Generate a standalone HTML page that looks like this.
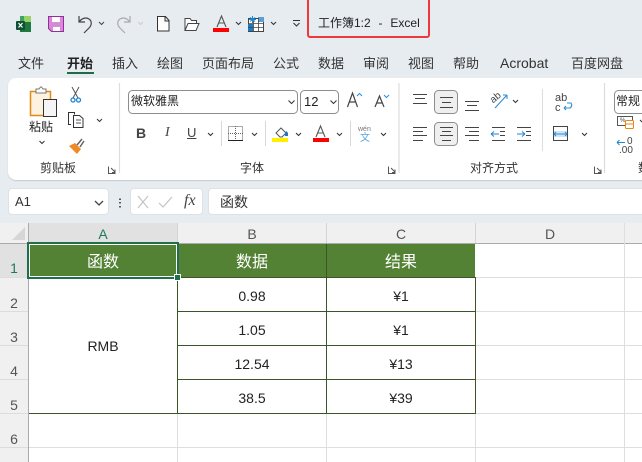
<!DOCTYPE html>
<html lang="zh"><head><meta charset="utf-8">
<style>
html,body{margin:0;padding:0}
body{width:642px;height:462px;overflow:hidden;position:relative;background:#e6ecf0;font-family:"Liberation Sans","Noto Sans CJK SC",sans-serif;color:#333}
.t{position:absolute;white-space:nowrap;line-height:1}
.c{position:absolute;transform:translateX(-50%);white-space:nowrap;line-height:1}
.b{position:absolute}
svg{position:absolute;left:0;top:0}
</style></head><body>

<div class="b" style="left:8px;top:78px;width:660px;height:102px;background:#fff;border-radius:8px;box-shadow:0 1px 1px #c4cacd"></div>
<div class="b" style="left:307px;top:-3px;width:119px;height:37px;border:2px solid #f0383c;border-radius:3px"></div>
<div class="t" style="left:318px;top:17px;font-size:12px;color:#222;word-spacing:.6px">工作簿1:2&nbsp;&nbsp;-&nbsp;&nbsp;Excel</div>

<div class="t" style="left:18px;top:57px;font-size:13px">文件</div>
<div class="t" style="left:67px;top:57px;font-size:13px;font-weight:bold;color:#222">开始</div>
<div class="b" style="left:67px;top:72px;width:27px;height:2px;background:#1e6b45"></div>
<div class="t" style="left:112px;top:57px;font-size:13px">插入</div>
<div class="t" style="left:157px;top:57px;font-size:13px">绘图</div>
<div class="t" style="left:202px;top:57px;font-size:13px">页面布局</div>
<div class="t" style="left:273px;top:57px;font-size:13px">公式</div>
<div class="t" style="left:318px;top:57px;font-size:13px">数据</div>
<div class="t" style="left:363px;top:57px;font-size:13px">审阅</div>
<div class="t" style="left:408px;top:57px;font-size:13px">视图</div>
<div class="t" style="left:453px;top:57px;font-size:13px">帮助</div>
<div class="t" style="left:500px;top:56px;font-size:14px">Acrobat</div>
<div class="t" style="left:571px;top:57px;font-size:13px">百度网盘</div>

<svg width="642" height="462" viewBox="0 0 642 462" fill="none">
<!-- QAT -->
<path d="M20 16h11v6h-11z" fill="#3fa45f"/><path d="M24 16h7v7h-7z" fill="#9ad26a"/><path d="M20 22h11v10h-11z" fill="#1d7a3c"/>
<rect x="16" y="21" width="9" height="9" rx="1" fill="#0f4f33"/><path d="M18.500 23l4 4.500M22.500 23l-4 4.500" stroke="#fff" stroke-width="1.200"/>
<path d="M48.500 16.500h15v15h-12l-3-3z" fill="#d58ad6" stroke="#9a2aa0"/><rect x="52" y="17" width="8" height="5" fill="#fff"/><rect x="53" y="27" width="7" height="4" fill="#fff"/>
<path d="M79 16v6h6M79 22c3-4 7-5 10-3 3 2 3 6 0 9l-5 5" stroke="#444" stroke-width="1.200"/>
<path d="M99 22l2.500 2.500 2.500-2.500" stroke="#444" stroke-width="1"/>
<path d="M130 16v6h-6M130 22c-3-4-7-5-10-3-3 2-3 6 0 9l5 5" stroke="#aaa" stroke-width="1.200"/>
<path d="M138 22l2.500 2.500 2.500-2.500" stroke="#ccc"/>
<path d="M157.500 16.500h8l3.500 4v10.500h-11.500zM165 16.500v4.500h4" stroke="#333" fill="#fff"/>
<path d="M185 30.500v-12h5l1.500 2h5v3M185 30.500l3-7h11l-3 7z" stroke="#444" fill="#fff"/>
<path d="M217 27l4.500-11 4.500 11M218.500 23h6" stroke="#555" stroke-width="1.100"/><rect x="213" y="28" width="16" height="4" fill="#f00"/>
<path d="M236 22l2.500 2.500 2.500-2.500M271 22l2.500 2.500 2.500-2.500" stroke="#333"/>
<rect x="248.500" y="18.500" width="15" height="13" stroke="#444" fill="#fff"/><rect x="258" y="17" width="6" height="5" fill="#5a9fd6"/><rect x="248" y="24" width="5" height="7" fill="#1f78c4"/><path d="M248 23.500h16M248 27.500h16M253.500 18v14M258.500 18v14" stroke="#444" stroke-width=".8"/>
<path d="M249 19.500h7M252.500 16v7M250 17.500l5 4M255 17.500l-5 4" stroke="#1f86d0"/>
<path d="M293 20.500h7M293.500 23l3 3 3-3" stroke="#333"/>
<!-- Clipboard -->
<path d="M30.500 91.500h20v24h-20z" fill="#fdf2df" stroke="#e48a14" stroke-width="1.500"/>
<path d="M36 92v-3h3l1.500-2h1l1.500 2h3v4h-10z" fill="#fff" stroke="#777"/>
<rect x="43.500" y="99.500" width="13" height="17" fill="#f5f5f5" stroke="#333"/>
<path d="M39.500 141l2.500 2.500 2.500-2.500" stroke="#333"/>
<path d="M72 87l6 11M79 87l-6 11" stroke="#555"/><circle cx="73" cy="100" r="2" stroke="#1c86d6" stroke-width="1.300"/><circle cx="78.500" cy="100" r="2" stroke="#1c86d6" stroke-width="1.300"/>
<path d="M71 124.500h-2.500v-12h6v2" stroke="#333"/><path d="M73.500 115.500h6l3.500 3v9h-9.500z" stroke="#333" fill="#fff"/><path d="M76 120h5M76 123h5" stroke="#555"/>
<path d="M97 119l2.500 2.500 2.500-2.500" stroke="#333"/>
<path d="M69 146l6-3 6 6-4 5z" fill="#f08a24"/><path d="M77 145l5-6M80 147l4-6" stroke="#666" stroke-width="1.500"/>
<path d="M108.500 166.500v7h7M111 168l4 4M115 169.500v3h-3" stroke="#555"/>
<path d="M119.500 83v90" stroke="#ddd" stroke-width="1.200"/>
<!-- Font -->
<rect x="128.500" y="90.500" width="169" height="23" rx="4" stroke="#8d8d8d" fill="#fff"/>
<path d="M288.500 100.500l3 3 3-3" stroke="#333"/>
<rect x="300.500" y="90.500" width="38" height="23" rx="4" stroke="#8d8d8d" fill="#fff"/>
<path d="M330.500 100.500l3 3 3-3" stroke="#333"/>
<path d="M347.500 107l5-14 5 14M349.500 102h6" stroke="#444" stroke-width="1.200"/><path d="M357 96l2.500-2.500 2.500 2.500" stroke="#2b8fd8"/>
<path d="M375 107l4.500-11 4.500 11M376.500 103h6" stroke="#444" stroke-width="1.200"/><path d="M384 95l2.500 2.500 2.500-2.500" stroke="#2b8fd8"/>
<path d="M208 133l2.500 2.500 2.500-2.500M252 133l2.500 2.500 2.500-2.500M296 133l2.500 2.500 2.500-2.500M337 133l2.500 2.500 2.500-2.500M381 133l2.500 2.500 2.500-2.500" stroke="#333"/>
<path d="M221.500 121v25M265.500 121v25M350.500 121v25" stroke="#d8d8d8"/>
<rect x="228.500" y="126.500" width="14" height="14" stroke="#555" stroke-dasharray="1 1"/><path d="M228 133.500h15M235.500 126v15" stroke="#666" stroke-dasharray="1 1"/><path d="M228 140.500h15" stroke="#222"/>
<path d="M276 133l5-5 5 5-4 4h-2z" stroke="#555" fill="#fff"/><path d="M285 133l1.500-2 1.500 2v3h-3z" fill="#1f78c4"/><rect x="272" y="138" width="16" height="4" fill="#ffef00"/>
<path d="M316 137l4.500-11 4.500 11M318 133h5" stroke="#555" stroke-width="1.100"/><rect x="313" y="138" width="16" height="4" fill="#f00"/>
<path d="M399 83v90" stroke="#ddd" stroke-width="1.200"/>
<path d="M388.500 166.500v7h7M391 168l4 4M395 169.500v3h-3" stroke="#555"/>
<!-- Align -->
<rect x="434.500" y="90.500" width="23" height="23" rx="4" fill="#efefef" stroke="#8d8d8d"/>
<rect x="434.500" y="122.500" width="23" height="23" rx="4" fill="#efefef" stroke="#8d8d8d"/>
<path d="M413 94.500h14M415 98.500h10M413 103.500h14M440 97.500h13M442 102.500h9M440 107.500h13M465 101.500h14M467 105.500h10M465 110.500h14" stroke="#444"/>
<path d="M413 127.500h14M413 131.500h10M413 135.500h14M413 140.500h10M440 127.500h13M442 131.500h9M440 135.500h13M442 140.500h9M465 127.500h14M469 131.500h10M465 135.500h14M469 140.500h10" stroke="#444"/>
<path d="M491 134h8M491 134l3-2.500M491 134l3 2.500" stroke="#1f86d0"/>
<path d="M492 127.500h13M500 131.500h5M500 135.500h5M492 140.500h13" stroke="#444"/>
<path d="M517 134h8M525 134l-3-2.500M525 134l-3 2.500" stroke="#1f86d0"/>
<path d="M517 127.500h14M526 131.500h5M526 135.500h5M517 140.500h14" stroke="#444"/>
<path d="M495 108l12-13M507 95v4M507 95h-4" stroke="#2b8fd8" stroke-width="1.100"/>
<text x="490" y="101" font-size="10" fill="#444" font-family="Liberation Sans" transform="rotate(-40 495 98)">ab</text>
<path d="M513 100l2.500 2.500 2.500-2.500" stroke="#333"/>
<path d="M542.500 89v62" stroke="#ddd"/>
<path d="M567 103h4q2 3-1 5h-6M564 108l2-2M564 108l2 2" stroke="#2b8fd8" stroke-width="1.100"/>
<rect x="553.500" y="126.500" width="14" height="14" stroke="#444" fill="#fff"/>
<rect x="554" y="131" width="13" height="6" fill="#cfe5f6"/><path d="M554 134h13M554 134l2-2M554 134l2 2M567 134l-2-2M567 134l-2 2" stroke="#2b8fd8"/>
<path d="M582 133l2.500 2.500 2.500-2.500" stroke="#333"/>
<path d="M604.500 83v90" stroke="#ddd" stroke-width="1.200"/>
<path d="M594.500 166.500v7h7M597 168l4 4M601 169.500v3h-3" stroke="#555"/>
<rect x="614.500" y="90.500" width="40" height="23" rx="4" stroke="#8d8d8d" fill="#fff"/>
<rect x="617.500" y="116.500" width="15" height="9" stroke="#555" fill="#fff"/>
<rect x="625.500" y="120.500" width="8" height="8" rx="1" fill="#fff" stroke="#e48a14"/><path d="M625 124h8" stroke="#e48a14"/>
<path d="M640 120l2 2" stroke="#333"/>
<path d="M625 142.500h-8M617 142.500l2.500-2.500M617 142.500l2.500 2.500" stroke="#1f86d0"/>
</svg>

<div class="t" style="left:131px;top:95px;font-size:12px;color:#222">微软雅黑</div>
<div class="t" style="left:304px;top:95px;font-size:13px;color:#222">12</div>
<div class="t" style="left:29px;top:121px;font-size:12px;color:#222">粘贴</div>
<div class="t" style="left:136px;top:126px;font-size:14px;font-weight:bold;color:#444">B</div>
<div class="t" style="left:165px;top:126px;font-size:14px;font-style:italic;font-family:'Liberation Serif',serif;color:#444">I</div>
<div class="t" style="left:187px;top:126px;font-size:13px;color:#444;text-decoration:underline">U</div>
<div class="t" style="left:358px;top:126px;font-size:7px;color:#777">wén</div>
<div class="t" style="left:360px;top:134px;font-size:10px;color:#58a6de">文</div>
<div class="t" style="left:555px;top:93px;font-size:11px;color:#444">ab</div>
<div class="t" style="left:555px;top:103px;font-size:11px;color:#444">c</div>
<div class="t" style="left:616px;top:95px;font-size:12px;color:#222">常规</div>
<div class="t" style="left:620px;top:118px;font-size:6px;color:#444">%</div>
<div class="t" style="left:627px;top:137px;font-size:10px;color:#444">0</div>
<div class="t" style="left:619px;top:146px;font-size:10px;color:#444">.00</div>
<div class="t" style="left:40px;top:162px;font-size:12px;color:#333">剪贴板</div>
<div class="t" style="left:240px;top:162px;font-size:12px;color:#333">字体</div>
<div class="t" style="left:470px;top:162px;font-size:12px;color:#333">对齐方式</div>
<div class="t" style="left:638px;top:162px;font-size:12px;color:#333">数</div>

<div class="b" style="left:8px;top:188px;width:99px;height:25px;background:#fff;border:1px solid #dde2e5;border-radius:4px"></div>
<div class="t" style="left:15px;top:195px;font-size:13px;color:#333">A1</div>
<div class="b" style="left:130px;top:188px;width:71px;height:25px;background:#fff;border:1px solid #dde2e5;border-radius:4px"></div>
<div class="b" style="left:208px;top:188px;width:450px;height:25px;background:#fff;border:1px solid #dde2e5;border-radius:4px"></div>
<div class="t" style="left:220px;top:195px;font-size:14px;color:#333">函数</div>
<div class="t" style="left:184px;top:193px;font-size:16px;font-style:italic;font-family:'Liberation Serif',serif;color:#444">fx</div>

<!-- Sheet -->
<div class="b" style="left:0;top:223px;width:642px;height:239px;background:#fff"></div>
<div class="b" style="left:0;top:223px;width:642px;height:20px;background:#f0f0f0"></div>
<div class="b" style="left:0;top:243px;width:28px;height:219px;background:#f0f0f0"></div>
<div class="b" style="left:29px;top:223px;width:148px;height:20px;background:#e1e1e1"></div>
<div class="b" style="left:0;top:243px;width:642px;height:1px;background:#ababab"></div>
<div class="b" style="left:28px;top:223px;width:1px;height:239px;background:#ababab"></div>
<div class="b" style="left:0;top:244px;width:28px;height:33px;background:#e1e1e1"></div>

<svg width="642" height="462" viewBox="0 0 642 462" fill="none">
<path d="M95 201l4 4 4-4" stroke="#444" stroke-width="1.300"/>
<path d="M120 198.500v1.500M120 202v1.500M120 206v1.500" stroke="#333" stroke-width="1.600"/>
<path d="M138 196l10 12M148 196l-10 12" stroke="#c4c4c4" stroke-width="1.200"/>
<path d="M159 203l4 4 9-10" stroke="#c4c4c4" stroke-width="1.200"/>
<path d="M12 240h13v-13z" fill="#d6d6d6"/>
<path d="M178 447.500H642M178 413.500H642M476 277.500H642M476 311.500H642M476 345.500H642M476 379.500H642M29 447.500H178M326.500 413v49M475.500 413v49M177.500 413v49M624.500 223v239" stroke="#dedede"/>
<path d="M326.500 223v20M475.500 223v20M177.500 223v20" stroke="#d4d4d4"/>
<path d="M0 277.500h28M0 311.500h28M0 345.500h28M0 379.500h28M0 413.500h28M0 447.500h28" stroke="#dcdcdc"/>
</svg>

<div class="b" style="left:28px;top:244px;width:447px;height:33px;background:#548235"></div>
<svg width="642" height="462" viewBox="0 0 642 462" fill="none">
<path d="M177.500 277v136M326.500 244v169M475.500 277v136M178 277.500h298M178 311.500h298M178 345.500h298M178 379.500h298M29 413.500h447" stroke="#3c5527"/>
<rect x="28" y="243" width="150" height="35" stroke="#1f6f4a" stroke-width="2"/>
<rect x="29.500" y="244.500" width="147" height="32" stroke="#fff"/>
<rect x="174.500" y="274.500" width="6" height="6" fill="#1f6f4a" stroke="#fff"/>
</svg>

<div class="c" style="left:103px;top:227px;font-size:14px;color:#1d7a5c">A</div>
<div class="c" style="left:252px;top:227px;font-size:14px;color:#555">B</div>
<div class="c" style="left:401px;top:227px;font-size:14px;color:#555">C</div>
<div class="c" style="left:550px;top:227px;font-size:14px;color:#555">D</div>
<div class="c" style="left:14px;top:261px;font-size:14px;color:#1d7a5c">1</div>
<div class="c" style="left:14px;top:296px;font-size:14px;color:#555">2</div>
<div class="c" style="left:14px;top:330px;font-size:14px;color:#555">3</div>
<div class="c" style="left:14px;top:364px;font-size:14px;color:#555">4</div>
<div class="c" style="left:14px;top:398px;font-size:14px;color:#555">5</div>
<div class="c" style="left:14px;top:432px;font-size:14px;color:#555">6</div>

<div class="c" style="left:103px;top:255px;font-size:16px;color:#fff">函数</div>
<div class="c" style="left:252px;top:255px;font-size:16px;color:#fff">数据</div>
<div class="c" style="left:401px;top:255px;font-size:16px;color:#fff">结果</div>
<div class="c" style="left:103px;top:339px;font-size:14px;color:#222">RMB</div>
<div class="c" style="left:252px;top:289px;font-size:14px;color:#222">0.98</div>
<div class="c" style="left:252px;top:323px;font-size:14px;color:#222">1.05</div>
<div class="c" style="left:252px;top:357px;font-size:14px;color:#222">12.54</div>
<div class="c" style="left:252px;top:391px;font-size:14px;color:#222">38.5</div>
<div class="c" style="left:401px;top:289px;font-size:14px;color:#222">¥1</div>
<div class="c" style="left:401px;top:323px;font-size:14px;color:#222">¥1</div>
<div class="c" style="left:401px;top:357px;font-size:14px;color:#222">¥13</div>
<div class="c" style="left:401px;top:391px;font-size:14px;color:#222">¥39</div>
</body></html>
